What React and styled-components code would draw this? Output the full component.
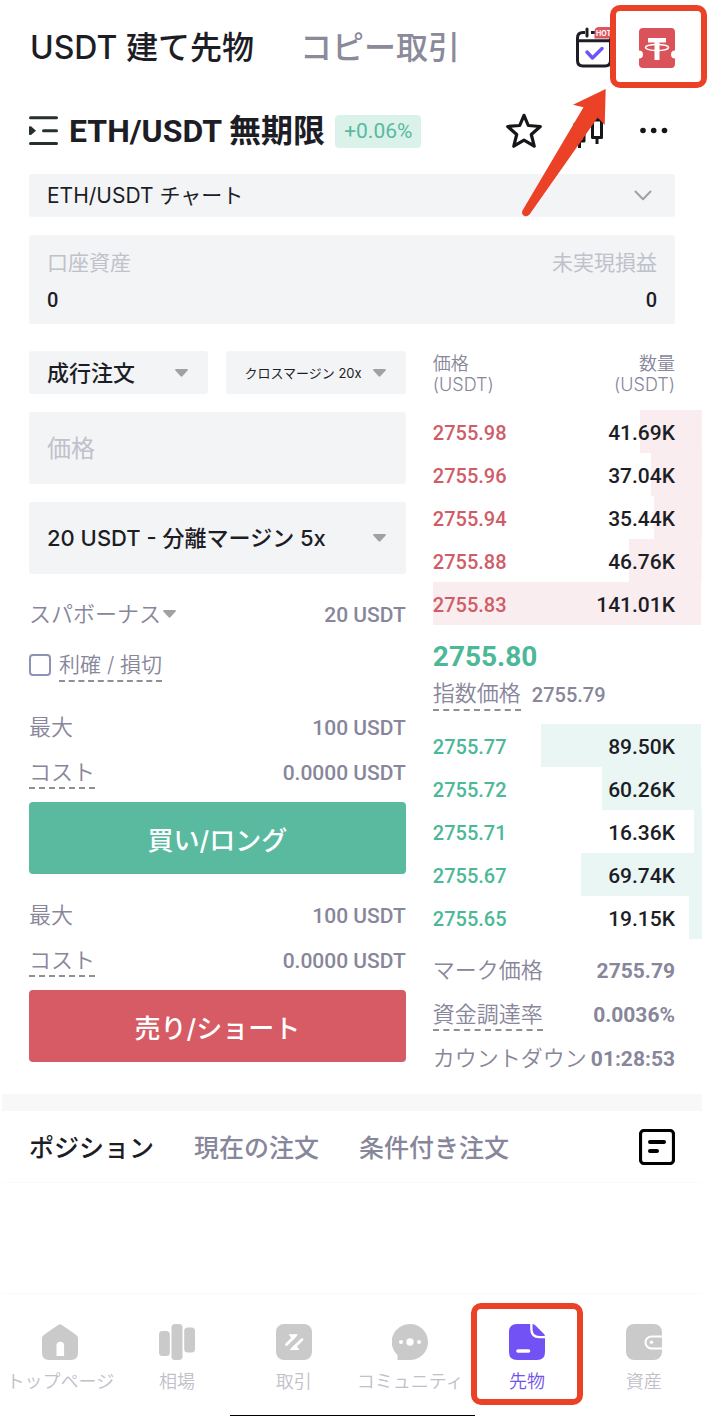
import { useState } from 'react'
import styled, { createGlobalStyle } from 'styled-components'

const GlobalStyle = createGlobalStyle`
  * {
    box-sizing: border-box;
  }
  body {
    margin: 0;
    background: #fff;
    color: #1d1d26;
    font-family: Inter, 'Noto Sans CJK JP', sans-serif;
  }
  button, input, select {
    margin: 0;
    font-family: inherit;
    color: inherit;
  }
  button {
    padding: 0;
    border: 0;
    background: none;
    cursor: pointer;
  }
  svg {
    display: block;
  }
`

const numberFont = "Roboto, 'Noto Sans CJK JP', sans-serif"

const Page = styled.div`
  display: flex;
  flex-direction: column;
  min-height: 100vh;
  padding: 0 24px 0 2px;
`
const TopBar = styled.header`
  display: flex;
  align-items: center;
  justify-content: space-between;
  height: 96px;
  padding: 0 27px 0 28px;
`
const Modes = styled.nav`
  display: flex;
  gap: 46px;
`
const Mode = styled.button`
  font-size: 32px;
  line-height: 40px;
  font-weight: 500;
  white-space: nowrap;
  color: ${(props) => (props.$active ? '#1d1d26' : '#8b8a9b')};
`
const Shortcuts = styled.div`
  display: flex;
  align-items: center;
  gap: 27px;
`
const Marked = styled.div`
  position: relative;
  display: flex;
  z-index: 1;
`
const Frame = styled.span`
  position: absolute;
  inset: ${(props) => props.$inset};
  border: 6px solid #ea4127;
  border-radius: 10px;
  pointer-events: none;
`
const Arrow = styled.svg`
  position: absolute;
  left: -119px;
  top: 60px;
  pointer-events: none;
`
const SymbolBar = styled.div`
  display: flex;
  align-items: center;
  justify-content: space-between;
  height: 70px;
  padding: 0 26px 0 27px;
`
const SymbolInfo = styled.div`
  display: flex;
  align-items: center;
  gap: 10px;
`
const SymbolName = styled.h1`
  margin: 0;
  font-family: ${numberFont};
  font-size: 32px;
  line-height: 40px;
  font-weight: 700;
  white-space: nowrap;
`
const Change = styled.span`
  padding: 0 9px;
  border-radius: 4px;
  background: #dbf2ea;
  color: #57ba9f;
  font-family: ${numberFont};
  font-size: 21px;
  line-height: 33px;
`
const Actions = styled.div`
  display: flex;
  align-items: center;
  gap: 31px;
`
const Overview = styled.section`
  display: flex;
  flex-direction: column;
  gap: 18px;
  padding: 8px 27px 27px;
`
const SelectBox = styled.label`
  position: relative;
  display: block;
  flex: 1;
  min-width: 0;

  svg {
    position: absolute;
    top: 50%;
    right: 20px;
    transform: translateY(-50%);
    pointer-events: none;
  }
`
const Select = styled.select`
  display: block;
  appearance: none;
  width: 100%;
  height: ${(props) => (props.$tall ? 72 : 43)}px;
  padding: 0 18px;
  border: 0;
  border-radius: 3px;
  background: #f3f4f6;
  font-size: ${(props) => props.$size || 22}px;
  font-weight: ${(props) => props.$weight || 500};
`
const Account = styled.div`
  display: flex;
  justify-content: space-between;
  padding: 16px 18px 12px;
  border-radius: 3px;
  background: #f3f4f6;
`
const AccountItem = styled.div`
  display: flex;
  flex-direction: column;
  gap: 13px;
  font-size: 21px;
  line-height: 24px;
  color: #c0c1ca;
  text-align: ${(props) => props.$align || 'left'};
`
const AccountValue = styled.span`
  font-family: ${numberFont};
  font-size: 20px;
  font-weight: 500;
  color: #1d1d26;
`
const Trade = styled.main`
  display: grid;
  grid-template-columns: minmax(0, 7fr) minmax(0, 5fr);
  gap: 27px;
  padding: 0 0 19px 27px;
`
const Form = styled.form`
  display: flex;
  flex-direction: column;
`
const Fields = styled.div`
  display: flex;
  flex-direction: column;
  gap: 18px;
  margin-bottom: 25px;
`
const FieldRow = styled.div`
  display: flex;
  gap: 18px;
`
const PriceInput = styled.input`
  width: 100%;
  height: 72px;
  padding: 0 18px;
  border: 0;
  border-radius: 3px;
  background: #f3f4f6;
  font-size: 24px;

  &::placeholder {
    color: #c0c1ca;
    opacity: 1;
  }
`
const Line = styled.div`
  display: flex;
  align-items: flex-start;
  justify-content: space-between;
  color: #87869a;
  font-size: 22px;
  line-height: 32px;
  white-space: nowrap;
`
const Label = styled.span`
  line-height: 30px;
  font-weight: 350;
  border-bottom: 2px ${(props) => (props.$hint ? 'dashed #8f8f96' : 'solid transparent')};
`
const BonusButton = styled.button`
  display: flex;
  align-items: center;
  gap: 2px;
  font-size: 22px;
  line-height: 30px;
  font-weight: 350;
`
const Value = styled.span`
  font-family: ${numberFont};
  font-size: 21px;
  font-weight: ${(props) => (props.$strong ? 700 : 500)};
`
const StopLine = styled.label`
  display: flex;
  align-items: flex-start;
  gap: 8px;
  margin: 19px 0 30px;
  color: #87869a;
  font-size: 21px;
`
const Checkbox = styled.input`
  appearance: none;
  width: 22px;
  height: 22px;
  margin: 4px 0 0;
  border: 2px solid #8d93b3;
  border-radius: 4px;
  background: #fff;

  &:checked {
    background: #8d93b3;
  }
`
const OrderGroup = styled.div`
  display: flex;
  flex-direction: column;
  gap: 13px;

  & + & {
    margin-top: 26px;
  }
`
const OrderButton = styled.button`
  height: 72px;
  border-radius: 4px;
  background: ${(props) => (props.$side === 'buy' ? '#59ba9f' : '#d65b65')};
  color: #fff;
  font-size: 26px;
  font-weight: 500;
`
const Book = styled.table`
  width: 100%;
  border-spacing: 0;
  font-family: ${numberFont};
  font-weight: 500;
`
const HeadCell = styled.th`
  padding: 2px ${(props) => (props.$right ? 27 : 0)}px 15px 0;
  color: #87869a;
  font-family: Inter, 'Noto Sans CJK JP', sans-serif;
  font-size: 18px;
  line-height: 21px;
  font-weight: 350;
  text-align: ${(props) => (props.$right ? 'right' : 'left')};
`
const BookRow = styled.tr`
  height: 43px;
  background-image: linear-gradient(
    ${(props) => (props.$side === 'ask' ? '#faedef, #faedef' : '#e9f6f4, #e9f6f4')}
  );
  background-repeat: no-repeat;
  background-position: right top;
`
const PriceCell = styled.td`
  padding: 2px 0 0;
  color: ${(props) => (props.$side === 'ask' ? '#cf5d68' : '#4db897')};
  font-size: 20px;
`
const AmountCell = styled.td`
  padding: 2px 27px 0 0;
  font-size: 21px;
  text-align: right;
`
const LastCell = styled.td`
  padding: 15px 0 13px;
`
const LastPrice = styled.div`
  margin-bottom: 5px;
  color: #4db897;
  font-size: 28px;
  line-height: 34px;
  font-weight: 700;
`
const IndexPrice = styled.div`
  display: flex;
  gap: 11px;
  color: #87869a;
  font-size: 22px;
  line-height: 32px;
`
const IndexValue = styled.span`
  font-size: 20px;
`
const Stats = styled.div`
  display: flex;
  flex-direction: column;
  gap: 12px;
  padding: 16px 27px 0 0;
`
const Divider = styled.div`
  height: 17px;
  background: #f8f8f8;
`
const Orders = styled.section`
  display: flex;
  align-items: center;
  justify-content: space-between;
  height: 72px;
  margin-bottom: 110px;
  padding: 0 27px;
  border-bottom: 1px solid #fafafa;
`
const OrderTabs = styled.div`
  display: flex;
  gap: 40px;
`
const OrderTab = styled.button`
  padding-top: 2px;
  font-size: 25px;
  line-height: 36px;
  font-weight: 500;
  white-space: nowrap;
  color: ${(props) => (props.$active ? '#1d1d26' : '#87869a')};
`
const BottomNav = styled.nav`
  display: grid;
  grid-template-columns: repeat(6, minmax(0, 1fr));
  margin-top: auto;
  padding: 30px 0 22px;
  border-top: 1px solid #fafafa;
`
const NavItem = styled.a`
  position: relative;
  display: flex;
  flex-direction: column;
  align-items: center;
  gap: 11px;
  color: ${(props) => (props.$active ? '#7054e8' : '#c0c0c9')};
  font-size: 18px;
  line-height: 22px;
  font-weight: 350;
  text-decoration: none;
  white-space: nowrap;
`
const HomeBar = styled.div`
  align-self: center;
  width: 35%;
  height: 1px;
  background: #000;
`

const Caret = () => (
  <svg width="13" height="8" viewBox="0 0 13 8" fill="#a0a1a3">
    <path d="M1 0h11q1.4.2.6 1.4L7.4 7.3q-.9.8-1.8 0L.4 1.4Q-.4.2 1 0z" />
  </svg>
)

const Chevron = () => (
  <svg width="22" height="12" viewBox="0 0 22 12" fill="none" stroke="#a0a1a3" strokeWidth="2" strokeLinecap="round" strokeLinejoin="round">
    <path d="M2.500 1.500 10 9.300 17.500 1.500" />
  </svg>
)

const CalendarIcon = () => (
  <svg width="36" height="42" viewBox="0 0 36 42" fill="none">
    <path d="M9 5.500H7q-5.500 0-5.500 5.500v22.500Q1.500 39 7 39h22q5.500 0 5.500-5.500V11q0-5.500-5.500-5.500H15" stroke="#1d1d26" strokeWidth="3" />
    <path d="M2 13.700h32M11 2v7" stroke="#1d1d26" strokeWidth="3" strokeLinecap="round" />
    <path d="M11 25l5.500 6 9.500-9.500" stroke="#6f54f4" strokeWidth="3.500" strokeLinecap="round" strokeLinejoin="round" />
    <path d="M23 0h13v11.500H18.500V5q0-5 4.500-5z" fill="#d9575f" />
    <text x="20" y="8.500" fill="#fff" fontSize="7" fontWeight="700" fontFamily="Inter, sans-serif">HOT</text>
  </svg>
)

const TicketIcon = () => (
  <svg width="36" height="40" viewBox="0 0 36 40">
    <path d="M4 0h28q4 0 4 4v18.500a4 4 0 0 0 0 8V36q0 4-4 4H4q-4 0-4-4v-5.500a4 4 0 0 0 0-8V4q0-4 4-4z" fill="#db535a" />
    <path d="M9 10h18v4.500h-6.500V32h-5V14.500H9z" fill="#fff" />
    <ellipse cx="18" cy="19.500" rx="11.500" ry="3" fill="none" stroke="#fff" strokeWidth="1.500" />
  </svg>
)

const MenuIcon = () => (
  <svg width="30" height="30" viewBox="0 0 30 30" stroke="#26302d" strokeWidth="3" strokeLinecap="round">
    <path d="M1.500 1.800h26M14.500 14.700h13M1.500 27.500h26" />
    <path d="M0 10.500l2-.3 5 4.500-5 4.300-2-.3z" fill="#26302d" stroke="none" />
  </svg>
)

const StarIcon = () => (
  <svg width="36" height="36" viewBox="0 0 36 36" fill="none" stroke="#16161a" strokeWidth="3.200" strokeLinejoin="round">
    <path d="M18 2.300l4.300 10.200 12 1-9 8 2.900 11.700L18 27.200 7.800 33.200l2.900-11.700-9-8 12-1z" />
  </svg>
)

const CandleIcon = () => (
  <svg width="36" height="36" viewBox="0 0 36 36" fill="none" stroke="#16161a" strokeWidth="3">
    <path d="M2 11h9v17H2zM6.500 5v6M6.500 28v7M19.500 7h9v17.500h-9zM24 2v5M24 24.500V31" strokeLinejoin="round" />
  </svg>
)

const MoreIcon = () => (
  <svg width="36" height="36" viewBox="0 0 36 36" fill="#16161a">
    <circle cx="3" cy="17.500" r="2.800" />
    <circle cx="13.700" cy="17.500" r="2.800" />
    <circle cx="24.500" cy="17.500" r="2.800" />
  </svg>
)

const NoteIcon = () => (
  <svg width="36" height="36" viewBox="0 0 36 36" fill="none" stroke="#000">
    <rect x="1.500" y="1.500" width="33" height="33" rx="3.500" strokeWidth="3.200" />
    <path d="M11 13h14M11 22h7" strokeWidth="4" strokeLinecap="round" />
  </svg>
)

const HomeIcon = () => (
  <svg width="36" height="36" viewBox="0 0 36 36" fill="#cacaca">
    <path d="M16.500.800q1.500-1.200 3 0l14.500 10q2 1.400 2 3.700V29q0 7-7 7H7q-7 0-7-7V14.500q0-2.300 2-3.700z" />
    <path d="M14.500 32V21.500a3.800 3.800 0 0 1 7.600 0V32z" fill="#fff" />
  </svg>
)

const MarketIcon = () => (
  <svg width="36" height="36" viewBox="0 0 36 36" fill="#cacaca">
    <rect x="0" y="7" width="10.800" height="25" rx="3.500" />
    <rect x="12.500" y="0" width="11" height="36" rx="3.500" />
    <rect x="25.200" y="3.500" width="10.800" height="25" rx="3.500" />
  </svg>
)

const SwapIcon = () => (
  <svg width="36" height="36" viewBox="0 0 36 36">
    <rect width="36" height="36" rx="8" fill="#cacaca" />
    <path d="M10.500 20.500 19.500 11.500M26 15.500 17 24.500" stroke="#fff" strokeWidth="2.800" strokeLinecap="round" />
    <path d="M12.500 10.300H22l-4.500 5.200-2.500-2zM23.500 26H13.500l5-5.200 2.500 2z" fill="#fff" />
  </svg>
)

const ChatIcon = () => (
  <svg width="36" height="36" viewBox="0 0 36 36">
    <path d="M18 0a18 18 0 1 1 0 36H5.500v-4.800A18 18 0 0 1 18 0z" fill="#cacaca" />
    <g fill="#fff">
      <circle cx="9" cy="18" r="2" />
      <circle cx="18" cy="18" r="3.700" />
      <circle cx="27" cy="18" r="2" />
    </g>
  </svg>
)

const FuturesIcon = () => (
  <svg width="36" height="36" viewBox="0 0 36 36" fill="#7352f5">
    <path d="M8 0h13.200v5q0 9.300 9.300 9.300H36V28q0 8-8 8H8q-8 0-8-8V8q0-8 8-8z" />
    <path d="M23.500 0q1.700.3 3 1.600l8 7.800q1.200 1.200 1.500 2.600h-5.500q-7 0-7-7z" />
    <path d="M9 27h10.500" stroke="#fff" strokeWidth="3.600" strokeLinecap="round" />
  </svg>
)

const WalletIcon = () => (
  <svg width="36" height="36" viewBox="0 0 36 36">
    <rect width="36" height="36" rx="8" fill="#cacaca" />
    <path d="M36 12.500H25.500a6 6 0 0 0 0 12H36" fill="none" stroke="#fff" strokeWidth="2" />
    <circle cx="25.500" cy="18.300" r="1.800" fill="#fff" />
  </svg>
)

const asks = [
  { price: '2755.98', amount: '41.69K', depth: 23 },
  { price: '2755.96', amount: '37.04K', depth: 19 },
  { price: '2755.94', amount: '35.44K', depth: 18 },
  { price: '2755.88', amount: '46.76K', depth: 27 },
  { price: '2755.83', amount: '141.01K', depth: 100 },
]

const bids = [
  { price: '2755.77', amount: '89.50K', depth: 60 },
  { price: '2755.72', amount: '60.26K', depth: 37 },
  { price: '2755.71', amount: '16.36K', depth: 3 },
  { price: '2755.67', amount: '69.74K', depth: 45 },
  { price: '2755.65', amount: '19.15K', depth: 5 },
]

const navItems = [
  { label: 'トップページ', Icon: HomeIcon },
  { label: '相場', Icon: MarketIcon },
  { label: '取引', Icon: SwapIcon },
  { label: 'コミュニティ', Icon: ChatIcon },
  { label: '先物', Icon: FuturesIcon, active: true },
  { label: '資産', Icon: WalletIcon },
]

const orderTabs = ['ポジション', '現在の注文', '条件付き注文']

const Dropdown = ({ label, text, icon, ...rest }) => (
  <SelectBox>
    <Select aria-label={label} {...rest}>
      <option>{text}</option>
    </Select>
    {icon || <Caret />}
  </SelectBox>
)

const BookRows = ({ rows, side }) => (
  <tbody>
    {rows.map((row) => (
      <BookRow
        key={row.price}
        $side={side}
        style={{ backgroundSize: `${row.depth}% 100%` }}
      >
        <PriceCell $side={side}>{row.price}</PriceCell>
        <AmountCell>{row.amount}</AmountCell>
      </BookRow>
    ))}
  </tbody>
)

const OrderSide = ({ side, children }) => (
  <OrderGroup>
    <Line>
      <Label>最大</Label>
      <Value>100 USDT</Value>
    </Line>
    <Line>
      <Label $hint>コスト</Label>
      <Value>0.0000 USDT</Value>
    </Line>
    <OrderButton type="button" $side={side}>
      {children}
    </OrderButton>
  </OrderGroup>
)

const OrderForm = () => {
  const [price, setPrice] = useState('')
  const [stop, setStop] = useState(false)

  return (
    <Form>
      <Fields>
        <FieldRow>
          <Dropdown label="注文タイプ" text="成行注文" />
          <Dropdown
            label="マージンモード"
            text="クロスマージン 20x"
            $size={13}
            $weight={400}
          />
        </FieldRow>
        <PriceInput
          aria-label="価格"
          placeholder="価格"
          value={price}
          onChange={(e) => setPrice(e.target.value)}
        />
        <Dropdown label="ボーナス" text="20 USDT - 分離マージン 5x" $tall />
      </Fields>
      <Line>
        <BonusButton type="button">
          スパボーナス
          <Caret />
        </BonusButton>
        <Value>20 USDT</Value>
      </Line>
      <StopLine>
        <Checkbox
          type="checkbox"
          checked={stop}
          onChange={(e) => setStop(e.target.checked)}
        />
        <Label $hint>利確 / 損切</Label>
      </StopLine>
      <OrderSide side="buy">買い/ロング</OrderSide>
      <OrderSide side="sell">売り/ショート</OrderSide>
    </Form>
  )
}

const OrderBook = () => (
  <div>
    <Book>
      <thead>
        <tr>
          <HeadCell>
            価格
            <br />
            (USDT)
          </HeadCell>
          <HeadCell $right>
            数量
            <br />
            (USDT)
          </HeadCell>
        </tr>
      </thead>
      <BookRows rows={asks} side="ask" />
      <tbody>
        <tr>
          <LastCell colSpan={2}>
            <LastPrice>2755.80</LastPrice>
            <IndexPrice>
              <Label $hint>指数価格</Label>
              <IndexValue>2755.79</IndexValue>
            </IndexPrice>
          </LastCell>
        </tr>
      </tbody>
      <BookRows rows={bids} side="bid" />
    </Book>
    <Stats>
      <Line>
        <Label>マーク価格</Label>
        <Value $strong>2755.79</Value>
      </Line>
      <Line>
        <Label $hint>資金調達率</Label>
        <Value $strong>0.0036%</Value>
      </Line>
      <Line>
        <Label>カウントダウン</Label>
        <Value $strong>01:28:53</Value>
      </Line>
    </Stats>
  </div>
)

const App = () => {
  const [tab, setTab] = useState(orderTabs[0])

  return (
    <Page>
      <GlobalStyle />
      <TopBar>
        <Modes>
          <Mode $active>USDT 建て先物</Mode>
          <Mode>コピー取引</Mode>
        </Modes>
        <Shortcuts>
          <button aria-label="イベント">
            <CalendarIcon />
          </button>
          <Marked>
            <button aria-label="ボーナス">
              <TicketIcon />
            </button>
            <Frame $inset="-23px -32px -20px -29px" />
            <Arrow width="88" height="130" viewBox="0 0 88 130" fill="#ea4127">
              <path d="M85.700 1 53 16.700l10.500 2.600L2.500 122.500Q1 126 4 127.700q3 1.500 5.500-1.200L77.700 29.500l7 7.500z" />
            </Arrow>
          </Marked>
        </Shortcuts>
      </TopBar>
      <SymbolBar>
        <SymbolInfo>
          <MenuIcon />
          <SymbolName>ETH/USDT 無期限</SymbolName>
          <Change>+0.06%</Change>
        </SymbolInfo>
        <Actions>
          <button aria-label="お気に入り">
            <StarIcon />
          </button>
          <button aria-label="チャート">
            <CandleIcon />
          </button>
          <button aria-label="その他">
            <MoreIcon />
          </button>
        </Actions>
      </SymbolBar>
      <Overview>
        <Dropdown
          label="チャート"
          text="ETH/USDT チャート"
          icon={<Chevron />}
          $size={21}
          $weight={400}
        />
        <Account>
          <AccountItem>
            口座資産
            <AccountValue>0</AccountValue>
          </AccountItem>
          <AccountItem $align="right">
            未実現損益
            <AccountValue>0</AccountValue>
          </AccountItem>
        </Account>
      </Overview>
      <Trade>
        <OrderForm />
        <OrderBook />
      </Trade>
      <Divider />
      <Orders>
        <OrderTabs>
          {orderTabs.map((name) => (
            <OrderTab
              key={name}
              $active={name === tab}
              onClick={() => setTab(name)}
            >
              {name}
            </OrderTab>
          ))}
        </OrderTabs>
        <button aria-label="注文履歴">
          <NoteIcon />
        </button>
      </Orders>
      <BottomNav>
        {navItems.map(({ label, Icon, active }) => (
          <NavItem key={label} href="#" $active={active}>
            <Icon />
            {label}
            {active && <Frame $inset="-21px 2px -12px 2px" />}
          </NavItem>
        ))}
      </BottomNav>
      <HomeBar />
    </Page>
  )
}

export default App
